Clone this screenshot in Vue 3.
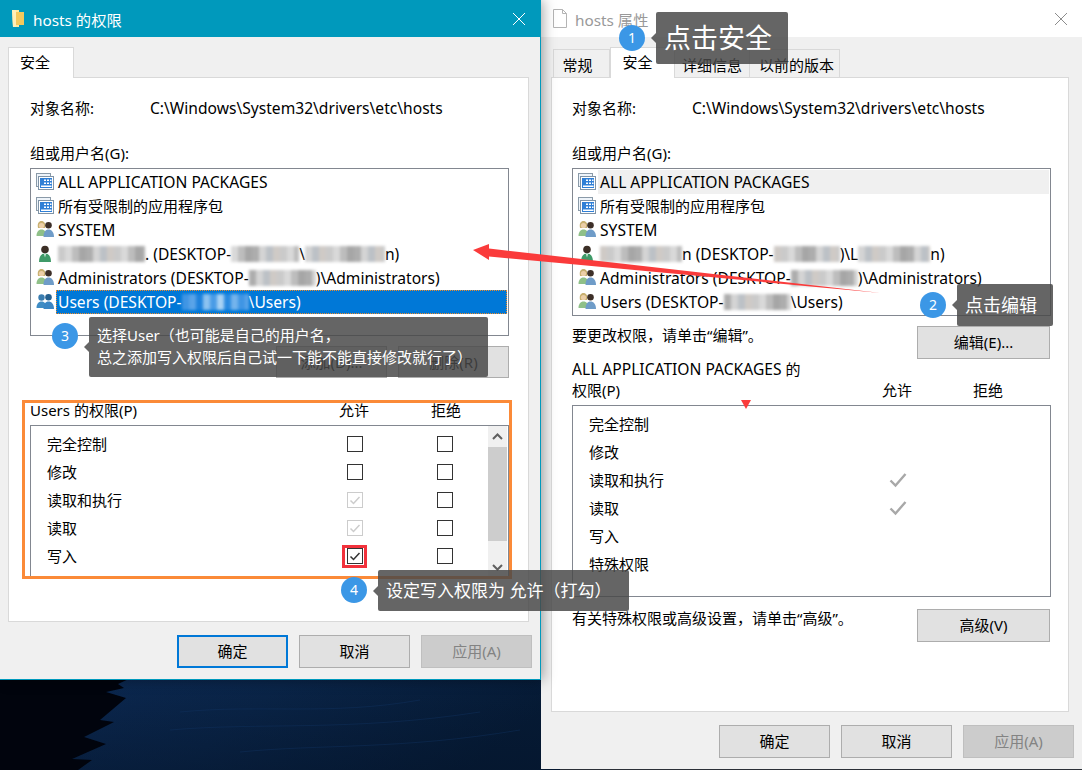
<script setup>
// list rows: text parts and mosaic widths for the blurred names
const leftRows = [
  { icon: 'app', parts: [{ t: 'ALL APPLICATION PACKAGES' }] },
  { icon: 'app', cjk: true, parts: [{ t: '所有受限制的应用程序包' }] },
  { icon: 'group', parts: [{ t: 'SYSTEM' }] },
  { icon: 'user', parts: [{ b: 87 }, { t: '. (DESKTOP-' }, { b: 68 }, { t: '\\' }, { b: 80 }, { t: 'n)' }] },
  { icon: 'group', parts: [{ t: 'Administrators (DESKTOP-' }, { b: 67 }, { t: ')\\Administrators)' }] },
  { icon: 'groupSel', selected: true, parts: [{ t: 'Users (DESKTOP-' }, { b: 67, tint: 'blue' }, { t: '\\Users)' }] },
]
const rightRows = [
  { icon: 'app', hover: true, parts: [{ t: 'ALL APPLICATION PACKAGES' }] },
  { icon: 'app', cjk: true, parts: [{ t: '所有受限制的应用程序包' }] },
  { icon: 'group', parts: [{ t: 'SYSTEM' }] },
  { icon: 'user', parts: [{ b: 82 }, { t: 'n (DESKTOP-' }, { b: 66 }, { t: ')\\L' }, { b: 72 }, { t: 'n)' }] },
  { icon: 'group', parts: [{ t: 'Administrators (DESKTOP-' }, { b: 67 }, { t: ')\\Administrators)' }] },
  { icon: 'group', parts: [{ t: 'Users (DESKTOP-' }, { b: 67 }, { t: '\\Users)' }] },
]
const iconRef = {
  app: '#ico-app',
  group: '#ico-group',
  user: '#ico-user',
  groupSel: '#ico-group-sel',
}

const leftPerms = [
  { name: '完全控制', allow: '', deny: '' },
  { name: '修改', allow: '', deny: '' },
  { name: '读取和执行', allow: 'inherited', deny: '' },
  { name: '读取', allow: 'inherited', deny: '' },
  { name: '写入', allow: 'checked', deny: '' },
]
const rightPerms = [
  { name: '完全控制' },
  { name: '修改' },
  { name: '读取和执行', allow: true },
  { name: '读取', allow: true },
  { name: '写入' },
  { name: '特殊权限' },
]

const grayShades = ['#d4d4d4', '#bdbdbd', '#cfcac6', '#adadad', '#d9d9d9', '#bcc1c6', '#a6a6a6', '#cacaca']
const blueShades = ['#5aa4e8', '#2a8ae0', '#8cc2f0', '#3f95e4', '#a8d2f4', '#1f82dc', '#74b4ec', '#4a9ce6']

// hard-stop gradient that looks like the mosaic over the hidden names
function mosaicStyle(width, tint) {
  const shades = tint === 'blue' ? blueShades : grayShades
  const step = 7
  const stops = []
  for (let i = 0; i * step < width; i++) {
    const c = shades[(i * 5 + width) % shades.length]
    stops.push(`${c} ${i * step}px ${(i + 1) * step}px`)
  }
  return { width: width + 'px', background: `linear-gradient(90deg, ${stops.join(', ')})` }
}
</script>

<template>
  <div class="desktop">
    <svg class="hidden-defs" width="0" height="0">
      <defs>
        <g id="ico-app">
          <rect x="0.500" y="0.500" width="14" height="13" fill="#eef4fa" stroke="#8a9aa8" />
          <rect x="2.500" y="3.500" width="15" height="13" fill="#fff" stroke="#7f93a6" />
          <rect x="4" y="5" width="12" height="10" fill="#2f7fd6" />
          <path d="M8 6.500h2V8H8zM11 6.500h2V8h-2zM14 6.500h1.500V8H14zM8 9.500h2V11H8zM11 9.500h2V11h-2zM14 9.500h1.500V11H14zM5 12.500h10.500v1.500H5z" fill="#fff" />
        </g>
        <g id="ico-group">
          <path d="M2 7c-1-5 1-7 3.500-7S10 2 9 7z" fill="#c8b070" />
          <circle cx="5.500" cy="4.500" r="2.600" fill="#eccfa8" />
          <path d="M0.500 15c0-4 2-6.500 5-6.500s5 2.500 5 6.500z" fill="#8fc088" />
          <circle cx="12.500" cy="4.300" r="3.300" fill="#3d2f28" />
          <path d="M7.500 16c0-5 2-7.500 5-7.500s5.500 2.500 5.500 7.500z" fill="#6f9cc8" />
        </g>
        <g id="ico-group-sel">
          <circle cx="5.500" cy="4.500" r="3.200" fill="#3a7db0" />
          <path d="M0.500 15c0-4 2-6.500 5-6.500s5 2.500 5 6.500z" fill="#3f8cc4" />
          <circle cx="12.500" cy="4.300" r="3.300" fill="#24608f" />
          <path d="M7.500 16c0-5 2-7.500 5-7.500s5.500 2.500 5.500 7.500z" fill="#3a86c4" />
        </g>
        <g id="ico-user">
          <circle cx="9" cy="4.500" r="3.800" fill="#3c2f26" />
          <path d="M3 17c0-6 2.500-8.500 6-8.500s6 2.500 6 8.500z" fill="#3f9a68" />
          <path d="M8 9h2L9 12.500z" fill="#dcefe4" />
        </g>
      </defs>
    </svg>

    <!-- desktop wallpaper under the two windows -->
    <svg class="wallpaper" width="1082" height="770" viewBox="0 0 1082 770">
      <defs>
        <linearGradient id="sea" x1="0" y1="0" x2="1" y2="0.200">
          <stop offset="0" stop-color="#0c2a55" />
          <stop offset="0.500" stop-color="#0a2549" />
          <stop offset="1" stop-color="#061b36" />
        </linearGradient>
        <linearGradient id="seafade" x1="0" y1="0" x2="0" y2="1">
          <stop offset="0" stop-color="#041328" stop-opacity="0" />
          <stop offset="1" stop-color="#041328" stop-opacity="0.450" />
        </linearGradient>
      </defs>
      <rect x="0" y="676" width="560" height="94" fill="url(#sea)" />
      <rect x="0" y="676" width="560" height="94" fill="url(#seafade)" />
      <path d="M180 712 C260 704 330 716 420 700 M170 730 C260 722 350 732 480 712 M240 752 C320 744 400 750 520 730" stroke="#123563" stroke-width="1" fill="none" opacity="0.400" />
      <path d="M0 676 H135 L118 684 L124 688 L106 692 L126 698 L100 720 L114 722 L84 737 L106 744 L72 759 L92 760 L78 770 H0 Z" fill="#01040d" />
    </svg>

    <!-- right window: file properties -->
    <section class="window window-right">
      <header class="titlebar titlebar-inactive">
        <svg class="title-icon" width="14" height="19" viewBox="0 0 14 19">
          <path d="M0.500 0.500h9l4 4v14h-13z" fill="#fff" stroke="#b4b4b4" />
          <path d="M9.500 0.500v4h4" fill="none" stroke="#b4b4b4" />
        </svg>
        <span class="title-text">hosts 属性</span>
        <svg class="close" width="14" height="14" viewBox="0 0 14 14"><path d="M1 1l12 12M13 1L1 13" stroke="#8c8c8c" stroke-width="1" /></svg>
      </header>
      <div class="tabs tabs-right">
        <span class="tab tab-general">常规</span>
        <span class="tab tab-active tab-security">安全</span>
        <span class="tab tab-details">详细信息</span>
        <span class="tab tab-previous">以前的版本</span>
      </div>
      <div class="panel panel-right">
        <div class="object-row"><span class="object-label">对象名称:</span><span class="latin">C:\Windows\System32\drivers\etc\hosts</span></div>
        <div class="group-label">组或用户名(G):</div>
        <ul class="user-list user-list-right">
          <li v-for="(row, i) in rightRows" :key="i" class="user-row">
            <svg class="row-icon" width="18" height="18" viewBox="0 0 18 18"><use :href="iconRef[row.icon]" /></svg>
            <span class="row-text" :class="{ hover: row.hover, cjk: row.cjk }">
              <template v-for="(part, j) in row.parts" :key="j">
                <span v-if="part.b" class="mosaic" :style="mosaicStyle(part.b, part.tint)"></span>
                <template v-else>{{ part.t }}</template>
              </template>
            </span>
          </li>
        </ul>
        <div class="action-row">
          <span class="hint">要更改权限，请单击“编辑”。</span>
          <button class="btn btn-wide">编辑(E)...</button>
        </div>
        <div class="perm-caption"><span class="latin">ALL APPLICATION PACKAGES</span> 的</div>
        <div class="perm-header-right"><span>权限(P)</span><span class="col-allow">允许</span><span class="col-deny">拒绝</span></div>
        <div class="perm-box-right">
          <div v-for="perm in rightPerms" :key="perm.name" class="perm-row-right">
            <span>{{ perm.name }}</span>
            <svg v-if="perm.allow" width="18" height="16" viewBox="0 0 18 16"><path d="M1.500 8.500l5 5L16.500 2" fill="none" stroke="#a8a8a8" stroke-width="2.400" /></svg>
          </div>
        </div>
        <div class="action-row action-row-advanced">
          <span class="hint">有关特殊权限或高级设置，请单击“高级”。</span>
          <button class="btn btn-wide">高级(V)</button>
        </div>
      </div>
      <footer class="footer footer-right">
        <button class="btn btn-dialog">确定</button>
        <button class="btn btn-dialog">取消</button>
        <button class="btn btn-dialog btn-disabled">应用(A)</button>
      </footer>
    </section>

    <!-- left window: permissions dialog -->
    <section class="window window-left">
      <header class="titlebar titlebar-active">
        <svg class="title-icon" width="14" height="19" viewBox="0 0 14 19">
          <path d="M1 1h7v17H2z" fill="#ffe9a0" />
          <path d="M5 3h8v13H5z" fill="#f4c95d" />
          <path d="M1 1h4v17H2z" fill="#ffefb8" />
        </svg>
        <span class="title-text">hosts 的权限</span>
        <svg class="close" width="14" height="14" viewBox="0 0 14 14"><path d="M1 1l12 12M13 1L1 13" stroke="#fff" stroke-width="1" /></svg>
      </header>
      <div class="tabs tabs-left">
        <span class="tab tab-active tab-only">安全</span>
      </div>
      <div class="panel panel-left">
        <div class="object-row"><span class="object-label">对象名称:</span><span class="latin">C:\Windows\System32\drivers\etc\hosts</span></div>
        <div class="group-label">组或用户名(G):</div>
        <ul class="user-list user-list-left">
          <li v-for="(row, i) in leftRows" :key="i" class="user-row">
            <svg class="row-icon" width="18" height="18" viewBox="0 0 18 18"><use :href="iconRef[row.icon]" /></svg>
            <span class="row-text" :class="{ selected: row.selected, cjk: row.cjk }">
              <template v-for="(part, j) in row.parts" :key="j">
                <span v-if="part.b" class="mosaic" :style="mosaicStyle(part.b, part.tint)"></span>
                <template v-else>{{ part.t }}</template>
              </template>
            </span>
          </li>
        </ul>
        <div class="add-remove">
          <button class="btn btn-small">添加(D)...</button>
          <button class="btn btn-small">删除(R)</button>
        </div>
        <div class="perm-header-left"><span>Users 的权限(P)</span><span>允许</span><span>拒绝</span></div>
        <div class="perm-box-left">
          <div class="perm-rows">
            <div v-for="perm in leftPerms" :key="perm.name" class="perm-row-left">
              <span class="perm-name">{{ perm.name }}</span>
              <span class="check" :class="perm.allow">
                <svg v-if="perm.allow" width="14" height="14" viewBox="0 0 14 14"><path d="M2.500 7.500l3 3 6-6.500" fill="none" stroke="currentColor" stroke-width="1.500" /></svg>
              </span>
              <span class="check"></span>
            </div>
          </div>
          <div class="scrollbar">
            <svg width="19" height="21" viewBox="0 0 19 21"><path d="M5 13l4.500-4.500L14 13" fill="none" stroke="#606060" stroke-width="2" /></svg>
            <div class="thumb"></div>
            <svg class="scroll-down" width="19" height="21" viewBox="0 0 19 21"><path d="M5 8l4.500 4.500L14 8" fill="none" stroke="#606060" stroke-width="2" /></svg>
          </div>
        </div>
      </div>
      <footer class="footer footer-left">
        <button class="btn btn-dialog btn-default">确定</button>
        <button class="btn btn-dialog">取消</button>
        <button class="btn btn-dialog btn-disabled">应用(A)</button>
      </footer>
    </section>

    <!-- tutorial annotations on top of the screenshot -->
    <div class="mark-orange"></div>
    <div class="mark-red"></div>
    <svg class="arrow-layer" width="1082" height="770" viewBox="0 0 1082 770">
      <path d="M473 250 L489 244 L489 248.500 L881 293 L489 256.500 L489 260 Z" fill="#fa3b3b" />
      <path d="M741 400 H751 L746 409 Z" fill="#fa3b3b" />
    </svg>

    <span class="step step-1">1</span>
    <div class="note note-1">点击安全</div>
    <span class="step step-2">2</span>
    <div class="note note-2">点击编辑</div>
    <span class="step step-3">3</span>
    <div class="note note-3">选择User（也可能是自己的用户名，<br />总之添加写入权限后自己试一下能不能直接修改就行了）</div>
    <span class="step step-4">4</span>
    <div class="note note-4">设定写入权限为 允许（打勾）</div>
  </div>
</template>

<style>
html,
body {
  margin: 0;
  overflow: hidden;
}
</style>

<style scoped>
.desktop {
  position: relative;
  width: 1082px;
  height: 770px;
  overflow: hidden;
  background: #2b3038;
  font-family: "Noto Sans", "Noto Sans CJK SC", sans-serif;
  font-size: 15px;
  color: #000;
}

.latin {
  font-size: 15.6px;
}

.hidden-defs {
  position: absolute;
}

.wallpaper {
  position: absolute;
  left: 0;
  top: 0;
}

.window {
  position: absolute;
  top: 0;
  display: flex;
  flex-direction: column;
  box-sizing: border-box;
  background: #f0f0f0;
}

.window-left {
  left: 0;
  width: 541px;
  height: 680px;
  border-right: 1px solid #0099bc;
  border-bottom: 1px solid #0099bc;
  box-shadow: 2px 0 12px rgba(0, 0, 0, 0.35);
}

.window-right {
  left: 541px;
  width: 541px;
  height: 769px;
}

.titlebar {
  display: flex;
  align-items: center;
  height: 37px;
  flex: none;
  background: #fff;
}

.titlebar-active {
  background: #0099bc;
  color: #fff;
  padding: 0 14px 0 11px;
}

.titlebar-inactive {
  color: #999;
  padding: 0 14px 0 12px;
}

.title-icon {
  flex: none;
  margin-right: 8px;
}

.title-text {
  flex: 1;
  font-size: 15.3px;
}

.tabs {
  display: flex;
  align-items: flex-end;
  height: 41px;
  flex: none;
  margin-bottom: -1px;
  position: relative;
}

.tabs-left {
  padding-left: 8px;
}

.tabs-right {
  padding-left: 12px;
}

.tab {
  box-sizing: border-box;
  display: flex;
  align-items: center;
  justify-content: center;
  height: 28px;
  padding-top: 2px;
  background: #f0f0f0;
  border: 1px solid #d9d9d9;
  border-bottom: 0;
  margin-bottom: 1px;
}

.tab-active {
  height: 31px;
  margin-bottom: 0;
  background: #fff;
  padding: 0 0 3px;
  position: relative;
}

.tab-only {
  width: 66px;
  padding-right: 12px;
}

.tab-general {
  width: 57px;
  padding-right: 8px;
}

.tab-security {
  width: 65px;
  padding-right: 10px;
}

.tab-details {
  width: 75px;
  border-left: 0;
}

.tab-previous {
  width: 90px;
  padding-left: 4px;
  border-left: 0;
}

.panel {
  box-sizing: border-box;
  display: flex;
  flex-direction: column;
  flex: none;
  background: #fff;
  border: 1px solid #d9d9d9;
}

.panel-left {
  width: 521px;
  height: 545px;
  margin-left: 8px;
  padding: 0 19px 0 21px;
}

.panel-right {
  width: 518px;
  height: 635px;
  margin-left: 10px;
  padding: 0 17px 0 20px;
}

.object-row {
  display: flex;
  height: 22px;
  line-height: 22px;
  margin-top: 19px;
}

.object-label {
  width: 120px;
}

.group-label {
  height: 22px;
  line-height: 22px;
  margin-top: 23px;
}

.user-list {
  list-style: none;
  box-sizing: border-box;
  margin: 4px 0 0;
  padding: 1px 1px 0 5px;
  border: 1px solid #828790;
}

.user-list-left {
  height: 168px;
}

.user-list-right {
  height: 148px;
}

.user-row {
  display: flex;
  align-items: center;
  height: 24px;
}

.row-icon {
  flex: none;
  margin-right: 2px;
}

.row-text {
  flex: 1;
  box-sizing: border-box;
  display: flex;
  align-items: center;
  height: 24px;
  padding-left: 2px;
  font-size: 15.6px;
  white-space: pre;
}

.row-text.cjk {
  font-size: 15px;
  padding-bottom: 2px;
}

.row-text.hover {
  background: #f0f0f0;
}

.row-text.selected {
  background: #0078d7;
  color: #fff;
  outline: 1px dotted #f08c28;
  outline-offset: -1px;
}

.mosaic {
  display: inline-block;
  height: 16px;
  filter: blur(1.5px);
}

.add-remove {
  display: flex;
  justify-content: flex-end;
  gap: 11px;
  margin-top: 10px;
}

.btn {
  box-sizing: border-box;
  padding: 0 0 2px;
  font: inherit;
  color: #000;
  background: #e1e1e1;
  border: 1px solid #adadad;
  border-radius: 0;
}

.btn-small {
  width: 111px;
  height: 32px;
}

.btn-wide {
  width: 133px;
  height: 33px;
}

.btn-dialog {
  width: 111px;
  height: 33px;
}

.btn-default {
  border: 2px solid #0078d7;
}

.btn-disabled {
  background: #cccccc;
  border-color: #bfbfbf;
  color: #838383;
}

.perm-header-left {
  display: grid;
  grid-template-columns: 1fr 30px 30px;
  column-gap: 62px;
  height: 22px;
  line-height: 22px;
  margin-top: 21px;
  padding-right: 48px;
}

.perm-box-left {
  box-sizing: border-box;
  display: flex;
  height: 153px;
  margin-top: 4px;
  border: 1px solid #828790;
  border-bottom: 0;
}

.perm-rows {
  flex: 1;
  padding: 4px 0 0 16px;
}

.perm-row-left {
  display: grid;
  grid-template-columns: 1fr 16px 16px;
  column-gap: 74px;
  align-items: center;
  height: 28px;
  padding-right: 35px;
}

.perm-name {
  padding-bottom: 2px;
}

.check {
  box-sizing: border-box;
  display: flex;
  align-items: center;
  justify-content: center;
  width: 16px;
  height: 16px;
  border: 1px solid #333;
}

.check.inherited {
  border-color: #cccccc;
  color: #cccccc;
}

.check.checked {
  color: #333;
}

.scrollbar {
  display: flex;
  flex-direction: column;
  width: 19px;
  margin-right: 1px;
  background: #f0f0f0;
}

.thumb {
  height: 94px;
  background: #cdcdcd;
}

.scroll-down {
  margin-top: auto;
}

.action-row {
  display: flex;
  justify-content: space-between;
  align-items: flex-start;
  margin-top: 10px;
  padding-right: 1px;
}

.action-row-advanced {
  margin-top: 12px;
}

.hint {
  line-height: 18px;
}

.perm-caption {
  height: 21px;
  line-height: 21px;
}

.perm-header-right {
  display: grid;
  grid-template-columns: 1fr 30px 30px;
  column-gap: 61px;
  height: 21px;
  line-height: 21px;
  padding-right: 48px;
}

.perm-box-right {
  box-sizing: border-box;
  height: 192px;
  margin-top: 4px;
  padding: 3px 143px 0 16px;
  border: 1px solid #828790;
}

.perm-row-right {
  display: flex;
  justify-content: space-between;
  align-items: center;
  height: 28px;
}

.perm-row-right svg {
  margin-top: 2px;
}

.footer {
  display: flex;
  margin-top: 13px;
}

.footer-left {
  gap: 11px;
  padding-left: 177px;
}

.footer-right {
  gap: 11px;
  padding-left: 178px;
}

.mark-orange {
  position: absolute;
  z-index: 2;
  left: 22px;
  top: 400px;
  width: 490px;
  height: 179px;
  box-sizing: border-box;
  border: 3px solid #fb8a38;
}

.mark-red {
  position: absolute;
  z-index: 2;
  left: 342px;
  top: 545px;
  width: 25px;
  height: 23px;
  box-sizing: border-box;
  border: 3px solid #f2323c;
}

.arrow-layer {
  position: absolute;
  z-index: 2;
  left: 0;
  top: 0;
}

.step {
  position: absolute;
  z-index: 3;
  width: 26px;
  height: 26px;
  border-radius: 50%;
  background: #3b97e6;
  color: #fff;
  font-size: 14px;
  line-height: 26px;
  text-align: center;
}

.step-1 { left: 619px; top: 25px; }
.step-2 { left: 920px; top: 292px; }
.step-3 { left: 52px; top: 323px; }
.step-4 { left: 341px; top: 577px; }

.note {
  position: absolute;
  z-index: 2;
  box-sizing: border-box;
  border-radius: 2px;
  background: rgba(72, 72, 72, 0.84);
  color: #fff;
}

.note::before {
  content: "";
  position: absolute;
  left: -5px;
  top: 50%;
  margin-top: -5px;
  border-top: 5px solid transparent;
  border-bottom: 5px solid transparent;
  border-right: 5px solid rgba(72, 72, 72, 0.84);
}

.note-1 {
  left: 656px;
  top: 12px;
  width: 132px;
  height: 52px;
  padding-left: 8px;
  font-size: 27px;
  line-height: 52px;
}

.note-2 {
  left: 957px;
  top: 284px;
  width: 96px;
  height: 42px;
  padding-left: 8px;
  font-size: 18px;
  line-height: 42px;
}

.note-3 {
  left: 89px;
  top: 317px;
  width: 399px;
  height: 60px;
  padding: 7px 0 0 8px;
  font-size: 15px;
  line-height: 22px;
}

.note-4 {
  left: 378px;
  top: 570px;
  width: 251px;
  height: 41px;
  padding-left: 8px;
  font-size: 17px;
  line-height: 41px;
}
</style>
